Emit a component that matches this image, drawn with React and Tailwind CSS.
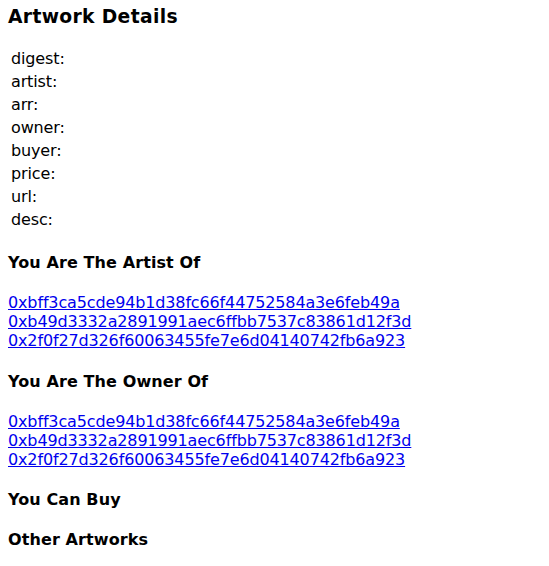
import React from 'react';

const FIELDS = ['digest', 'artist', 'arr', 'owner', 'buyer', 'price', 'url', 'desc'];

const HASHES = [
  '0xbff3ca5cde94b1d38fc66f44752584a3e6feb49a',
  '0xb49d3332a2891991aec6ffbb7537c83861d12f3d',
  '0x2f0f27d326f60063455fe7e6d04140742fb6a923',
];

const LinkList = ({ items }) => (
  <div className="mt-[21.28px]">
    {items.map(h => (
      <a key={h} href="#" className="block text-[#0000ee] underline">{h}</a>
    ))}
  </div>
);

const App = () => {
  return (
    <div className="px-2 pt-[6px] pb-2 font-['DejaVu_Sans',sans-serif] text-base leading-[normal] tracking-[-0.14px] text-black bg-white">
      <h3 className="text-[18.72px] font-bold leading-[normal] tracking-[0.35px]">Artwork Details</h3>

      {/* details table, empty values */}
      <table className="mt-[18.72px] border-separate border-spacing-[2px]">
        <tbody>
          {FIELDS.map(f => (
            <tr key={f}>
              <td className="p-px">{f}:</td>
              <td className="p-px"></td>
            </tr>
          ))}
        </tbody>
      </table>

      <h4 className="mt-[21.28px] font-bold tracking-[0.1px]">You Are The Artist Of</h4>
      <LinkList items={HASHES} />

      <h4 className="mt-[21.28px] font-bold tracking-[0.1px]">You Are The Owner Of</h4>
      <LinkList items={HASHES} />

      <h4 className="mt-[21.28px] font-bold tracking-[0.1px]">You Can Buy</h4>

      <h4 className="mt-[21.28px] font-bold tracking-[0.1px]">Other Artworks</h4>
    </div>
  );
};

export default App;
